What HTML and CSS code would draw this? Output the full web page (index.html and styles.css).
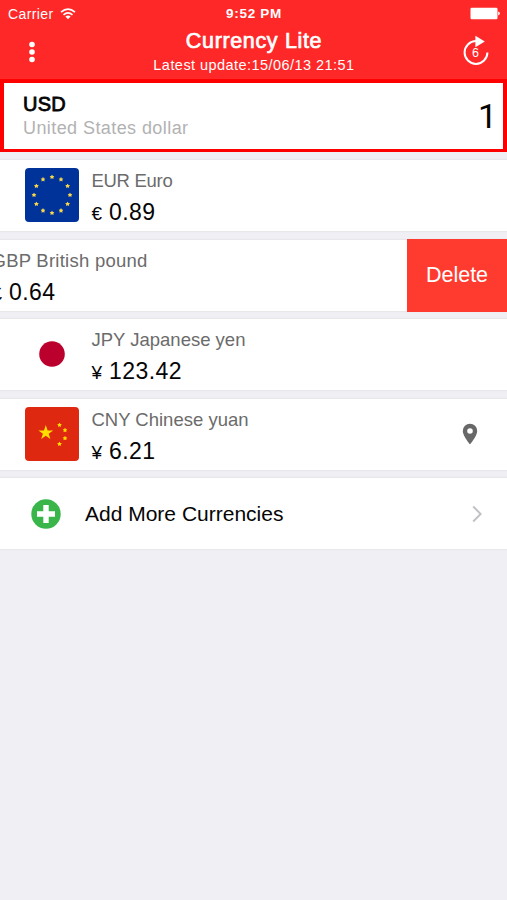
FILE: index.html
```html
<!DOCTYPE html>
<html lang="en">
<head>
<meta charset="utf-8">
<title>Currency Lite</title>
<link rel="stylesheet" href="styles.css">
</head>
<body>
<svg class="defs" width="0" height="0" aria-hidden="true">
  <symbol id="star" viewBox="-10 -10 20 20"><path d="M0-10 2.3-3.1H9.5L3.7 1.2 5.9 8.1 0 3.8-5.9 8.1-3.7 1.2-9.5-3.1H-2.3Z"/></symbol>
  <symbol id="small-star" viewBox="-10 -10 20 20"><path d="M0-10 3.2-3.8 9.5-3.1 5 1.6 5.9 8.1 0 5.2-5.9 8.1-5 1.6-9.5-3.1-3.2-3.8Z"/></symbol>
</svg>
<header class="header">
  <div class="status">
    <div class="carrier"><span>Carrier</span>
      <svg class="wifi" width="16" height="12" viewBox="0 0 16 12"><path d="M1 4.2Q8-2 15 4.2M3.5 6.8Q8 3 12.5 6.8" fill="none" stroke="#fff" stroke-width="1.7"/><path d="M5.4 8.4Q8 6.4 10.6 8.4L8 11.2Z" fill="#fff"/></svg>
    </div>
    <span class="clock">9:52 PM</span>
    <svg class="battery" width="30" height="13" viewBox="0 0 30 13"><rect x=".5" y=".8" width="27" height="11.5" rx="1.2" fill="#fff"/><path d="M28.2 4.5Q30 5 29.8 6.5T28.2 8.5Z" fill="#fff"/></svg>
  </div>
  <div class="nav">
    <svg class="menu" width="8" height="22" viewBox="0 0 8 22" fill="#fff"><circle cx="4" cy="3.5" r="2.8"/><circle cx="4" cy="11" r="2.8"/><circle cx="4" cy="18.5" r="2.8"/></svg>
    <div class="titles">
      <h1 class="title">Currency Lite</h1>
      <p class="update">Latest update:15/06/13 21:51</p>
    </div>
    <svg class="refresh" width="28" height="32" viewBox="0 0 28 32"><path d="M14 6.1A11.4 11.4 0 1 0 25.4 17.5" fill="none" stroke="#fff" stroke-width="2"/><path d="M13.4.8 22.8 6.5 13.4 12.2Z" fill="#fff"/><text class="count" x="13.5" y="21.8" text-anchor="middle">6</text></svg>
  </div>
</header>
<main>
  <section class="base">
    <div><div class="code">USD</div><div class="base-name">United States dollar</div></div>
    <div class="amount">1</div>
  </section>
  <ul class="list">
    <li class="row">
      <svg class="flag" width="54" height="54" viewBox="-27 -27 54 54"><rect x="-27" y="-27" width="54" height="54" rx="4" fill="#003399"/>
        <g fill="#f7d64a"><use href="#small-star" x="-2.6" y="-20.6" width="5.2" height="5.2"/><use href="#small-star" x="6.4" y="-18.2" width="5.2" height="5.2"/><use href="#small-star" x="13" y="-11.6" width="5.2" height="5.2"/><use href="#small-star" x="15.4" y="-2.6" width="5.2" height="5.2"/><use href="#small-star" x="13" y="6.4" width="5.2" height="5.2"/><use href="#small-star" x="6.4" y="13" width="5.2" height="5.2"/><use href="#small-star" x="-2.6" y="15.4" width="5.2" height="5.2"/><use href="#small-star" x="-11.6" y="13" width="5.2" height="5.2"/><use href="#small-star" x="-18.2" y="6.4" width="5.2" height="5.2"/><use href="#small-star" x="-20.6" y="-2.6" width="5.2" height="5.2"/><use href="#small-star" x="-18.2" y="-11.6" width="5.2" height="5.2"/><use href="#small-star" x="-11.6" y="-18.2" width="5.2" height="5.2"/></g></svg>
      <div class="info"><div class="name tight">EUR Euro</div><div class="value"><span class="sym">€</span>0.89</div></div>
    </li>
    <li class="row swiped">
      <div class="info"><div class="name loose">GBP British pound</div><div class="value"><span class="sym">£</span>0.64</div></div>
      <button class="delete">Delete</button>
    </li>
    <li class="row">
      <svg class="flag" width="54" height="54" viewBox="-27 -27 54 54"><rect x="-27" y="-27" width="54" height="54" rx="4" fill="#fff"/><circle r="12.8" fill="#bc002d"/></svg>
      <div class="info"><div class="name">JPY Japanese yen</div><div class="value"><span class="sym">¥</span>123.42</div></div>
    </li>
    <li class="row">
      <svg class="flag" width="54" height="54" viewBox="0 0 54 54"><rect width="54" height="54" rx="4" fill="#de2910"/><g fill="#ffde00"><use href="#star" x="13" y="18" width="15.6" height="15.6"/><use href="#small-star" x="32" y="15.4" width="5" height="5"/><use href="#small-star" x="37.5" y="20.6" width="5" height="5"/><use href="#small-star" x="37.5" y="28.8" width="5" height="5"/><use href="#small-star" x="32" y="34.5" width="5" height="5"/></g></svg>
      <div class="info"><div class="name">CNY Chinese yuan</div><div class="value"><span class="sym">¥</span>6.21</div></div>
      <svg class="pin" width="16" height="22" viewBox="0 0 16 22"><path fill="#686868" fill-rule="evenodd" d="M8 .7A7.2 7.2 0 0 0 .8 7.9C.8 12.8 8 21.3 8 21.3S15.2 12.8 15.2 7.9A7.2 7.2 0 0 0 8 .7ZM8 5.2A2.8 2.8 0 1 1 8 10.8 2.8 2.8 0 0 1 8 5.2Z"/></svg>
    </li>
    <li class="row add">
      <svg class="plus" width="30" height="30" viewBox="0 0 30 30"><circle cx="15" cy="15" r="14.7" fill="#39b54a"/><path d="M15 6V24M6 15H24" stroke="#fff" stroke-width="5.4"/></svg>
      <span class="add-label">Add More Currencies</span>
      <svg class="chevron" width="10" height="18" viewBox="0 0 10 18"><path d="M1.2 1.5 8.7 9 1.2 16.5" fill="none" stroke="#c2c2c6" stroke-width="2"/></svg>
    </li>
  </ul>
</main>
</body>
</html>
```
FILE: styles.css
```css
* { box-sizing: border-box; }
body { margin: 0; min-height: 900px; background: #efeff4; font-family: "Liberation Sans", Arial, sans-serif; color: #050505; overflow-x: hidden; }
h1, p, ul { margin: 0; padding: 0; font-weight: 400; }
svg { display: block; flex: none; }
.defs { position: absolute; }
.header { height: 79px; background: #ff2828; color: #fff; }
.status { height: 27px; display: grid; grid-template-columns: 1fr auto 1fr; align-items: center; padding: 0 7px 0 8px; font-size: 14px; }
.carrier { display: flex; align-items: center; gap: 6px; letter-spacing: .4px; }
.clock { font-size: 13.5px; font-weight: 700; letter-spacing: .7px; }
.battery { justify-self: end; }
.nav { height: 52px; display: grid; grid-template-columns: 28px 1fr 28px; padding: 0 17px 0 27px; }
.menu { margin-top: 14px; margin-left: .5px; }
.refresh { margin-top: 8px; }
.count { font-size: 12.5px; fill: #fff; }
.titles { text-align: center; white-space: nowrap; padding-right: 9px; }
.title { font-size: 21.5px; line-height: 28px; letter-spacing: .65px; -webkit-text-stroke: .7px #fff; }
.update { font-size: 14.5px; line-height: 20px; letter-spacing: .45px; }
.base { height: 73px; border: 4px solid #f00; border-bottom-width: 3.5px; background: #fff; display: flex; justify-content: space-between; align-items: center; padding: 0 6px 0 19px; }
.code { font-size: 20px; line-height: 24px; letter-spacing: .2px; -webkit-text-stroke: .8px #050505; }
.base-name { font-size: 18px; line-height: 24px; letter-spacing: .42px; color: #b2b2b2; }
.amount { font: 34px/60px Roboto, sans-serif; }
.list { list-style: none; display: grid; grid-auto-rows: 71px; gap: 8.5px; margin-top: 8px; }
.row { background: #fff; box-shadow: 0 0 1px 1px #e8e8eb; display: flex; padding-left: 25px; }
.flag { margin: 8px 12.5px 0 0; }
.info { flex: 1; white-space: nowrap; padding-top: 10px; }
.name { font-size: 18.5px; line-height: 22px; color: #6b6b6b; }
.tight { letter-spacing: -.3px; }
.loose { letter-spacing: .25px; }
.value { font-size: 23px; line-height: 30px; margin-top: 5px; letter-spacing: .45px; }
.sym { font-size: 19px; margin-right: 6.5px; }
.swiped { padding-left: 0; }
.swiped .info { margin-left: -8.5px; }
.delete { width: 100px; height: 73px; margin-top: -1px; border: 0; padding: 0; background: #ff3b30; color: #fff; font: 21.5px "Liberation Sans", Arial, sans-serif; }
.pin { margin: 24px 29px 0 0; }
.add { align-items: center; padding-left: 30.5px; }
.add-label { flex: 1; font-size: 21px; margin-left: 24.5px; }
.chevron { margin-right: 25px; }
```
